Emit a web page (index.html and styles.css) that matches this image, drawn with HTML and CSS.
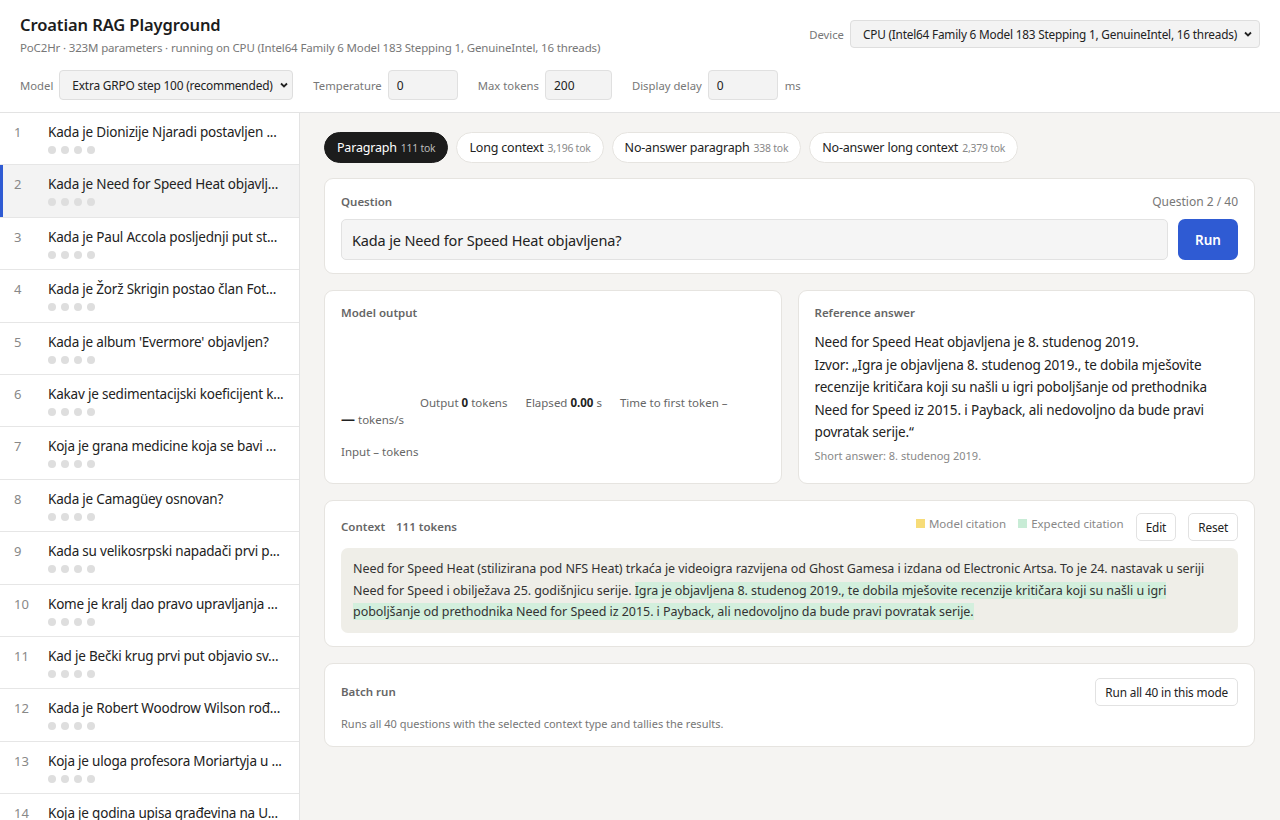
FILE: index.html
```html
<!DOCTYPE html>
<html lang="hr">
<head>
<meta charset="utf-8">
<title>Croatian RAG Playground</title>
<link rel="stylesheet" href="styles.css">
</head>
<body>
<header class="topbar">
  <div class="top-row">
    <div class="brand">
      <h1 class="title">Croatian RAG Playground</h1>
      <div class="subtitle">PoC2Hr · 323M parameters · running on CPU (Intel64 Family 6 Model 183 Stepping 1, GenuineIntel, 16 threads)</div>
    </div>
    <label class="field device">
      <span class="field-label">Device</span>
      <span class="select select-device">CPU (Intel64 Family 6 Model 183 Stepping 1, GenuineIntel, 16 threads)<svg class="chev" viewBox="0 0 10 10"><path d="M2 3.5 L5 6.5 L8 3.5" fill="none" stroke="#222" stroke-width="1.8"/></svg></span>
    </label>
  </div>
  <div class="controls">
    <label class="field">
      <span class="field-label">Model</span>
      <span class="select select-model">Extra GRPO step 100 (recommended)<svg class="chev" viewBox="0 0 10 10"><path d="M2 3.5 L5 6.5 L8 3.5" fill="none" stroke="#222" stroke-width="1.8"/></svg></span>
    </label>
    <label class="field">
      <span class="field-label">Temperature</span>
      <span class="input input-sm">0</span>
    </label>
    <label class="field">
      <span class="field-label">Max tokens</span>
      <span class="input input-xs">200</span>
    </label>
    <label class="field">
      <span class="field-label">Display delay</span>
      <span class="input input-sm">0</span>
      <span class="field-label unit">ms</span>
    </label>
  </div>
</header>

<div class="layout">
  <aside class="sidebar">
    <div class="q-item"><span class="q-num">1</span><div class="q-body"><div class="q-text">Kada je Dionizije Njaradi postavljen ...</div><div class="dots"><i></i><i></i><i></i><i></i></div></div></div>
    <div class="q-item active"><span class="q-num">2</span><div class="q-body"><div class="q-text">Kada je Need for Speed Heat objavlj...</div><div class="dots"><i></i><i></i><i></i><i></i></div></div></div>
    <div class="q-item"><span class="q-num">3</span><div class="q-body"><div class="q-text">Kada je Paul Accola posljednji put st...</div><div class="dots"><i></i><i></i><i></i><i></i></div></div></div>
    <div class="q-item"><span class="q-num">4</span><div class="q-body"><div class="q-text">Kada je Žorž Skrigin postao član Fot...</div><div class="dots"><i></i><i></i><i></i><i></i></div></div></div>
    <div class="q-item"><span class="q-num">5</span><div class="q-body"><div class="q-text">Kada je album 'Evermore' objavljen?</div><div class="dots"><i></i><i></i><i></i><i></i></div></div></div>
    <div class="q-item"><span class="q-num">6</span><div class="q-body"><div class="q-text">Kakav je sedimentacijski koeficijent k...</div><div class="dots"><i></i><i></i><i></i><i></i></div></div></div>
    <div class="q-item"><span class="q-num">7</span><div class="q-body"><div class="q-text">Koja je grana medicine koja se bavi ...</div><div class="dots"><i></i><i></i><i></i><i></i></div></div></div>
    <div class="q-item"><span class="q-num">8</span><div class="q-body"><div class="q-text">Kada je Camagüey osnovan?</div><div class="dots"><i></i><i></i><i></i><i></i></div></div></div>
    <div class="q-item"><span class="q-num">9</span><div class="q-body"><div class="q-text">Kada su velikosrpski napadači prvi p...</div><div class="dots"><i></i><i></i><i></i><i></i></div></div></div>
    <div class="q-item"><span class="q-num">10</span><div class="q-body"><div class="q-text">Kome je kralj dao pravo upravljanja ...</div><div class="dots"><i></i><i></i><i></i><i></i></div></div></div>
    <div class="q-item"><span class="q-num">11</span><div class="q-body"><div class="q-text">Kad je Bečki krug prvi put objavio sv...</div><div class="dots"><i></i><i></i><i></i><i></i></div></div></div>
    <div class="q-item"><span class="q-num">12</span><div class="q-body"><div class="q-text">Kada je Robert Woodrow Wilson rođ...</div><div class="dots"><i></i><i></i><i></i><i></i></div></div></div>
    <div class="q-item"><span class="q-num">13</span><div class="q-body"><div class="q-text">Koja je uloga profesora Moriartyja u ...</div><div class="dots"><i></i><i></i><i></i><i></i></div></div></div>
    <div class="q-item"><span class="q-num">14</span><div class="q-body"><div class="q-text">Koja je godina upisa građevina na U...</div><div class="dots"><i></i><i></i><i></i><i></i></div></div></div>
  </aside>

  <main class="main">
    <div class="pills">
      <span class="pill active">Paragraph <small>111 tok</small></span>
      <span class="pill">Long context <small>3,196 tok</small></span>
      <span class="pill">No-answer paragraph <small>338 tok</small></span>
      <span class="pill">No-answer long context <small>2,379 tok</small></span>
    </div>

    <section class="card">
      <div class="card-head">
        <span class="card-label">Question</span>
        <span class="card-meta">Question 2 / 40</span>
      </div>
      <div class="ask-row">
        <div class="ask-input">Kada je Need for Speed Heat objavljena?</div>
        <button class="btn-primary">Run</button>
      </div>
    </section>

    <div class="two-col">
      <section class="card">
        <div class="card-label">Model output</div>
        <div class="stats">
          <div class="stats-line">
            <span>Output <b>0</b> tokens</span>
            <span>Elapsed <b>0.00</b> s</span>
            <span>Time to first token –</span>
          </div>
          <div class="rate"><b class="bigdash">—</b> tokens/s</div>
        </div>
        <div class="input-tokens">Input – tokens</div>
      </section>
      <section class="card">
        <div class="card-label">Reference answer</div>
        <div class="answer">Need for Speed Heat objavljena je 8. studenog 2019.<br>Izvor: „Igra je objavljena 8. studenog 2019., te dobila mješovite recenzije kritičara koji su našli u igri poboljšanje od prethodnika Need for Speed iz 2015. i Payback, ali nedovoljno da bude pravi povratak serije.“</div>
        <div class="short">Short answer: 8. studenog 2019.</div>
      </section>
    </div>

    <section class="card">
      <div class="card-head ctx-head">
        <span class="card-label">Context <span class="tok">111 tokens</span></span>
        <div class="ctx-tools">
          <span class="legend"><i class="sw sw-model"></i>Model citation</span>
          <span class="legend"><i class="sw sw-exp"></i>Expected citation</span>
          <button class="btn">Edit</button>
          <button class="btn">Reset</button>
        </div>
      </div>
      <div class="ctx-box">Need for Speed Heat (stilizirana pod NFS Heat) trkaća je videoigra razvijena od Ghost Gamesa i izdana od Electronic Artsa. To je 24. nastavak u seriji Need for Speed i obilježava 25. godišnjicu serije. <mark class="exp">Igra je objavljena 8. studenog 2019., te dobila mješovite recenzije kritičara koji su našli u igri poboljšanje od prethodnika Need for Speed iz 2015. i Payback, ali nedovoljno da bude pravi povratak serije.</mark></div>
    </section>

    <section class="card">
      <div class="card-head batch-head">
        <span class="card-label">Batch run</span>
        <button class="btn">Run all 40 in this mode</button>
      </div>
      <div class="batch-note">Runs all 40 questions with the selected context type and tallies the results.</div>
    </section>
  </main>
</div>
</body>
</html>
```

FILE: styles.css
```css
* { box-sizing: border-box; }
html, body { margin: 0; padding: 0; height: 100%; }
body {
  font-family: "Noto Sans", "Open Sans", sans-serif;
  color: #222;
  background: #f5f4f2;
  overflow: hidden;
  font-size: 13px;
}

.topbar {
  background: #fff;
  border-bottom: 1px solid #e3e3e3;
  height: 113px;
  padding: 14px 20px 0 20px;
}
.top-row { display: flex; justify-content: space-between; align-items: flex-start; }
.title { margin: 0; font-size: 16.5px; font-weight: 600; line-height: 22px; color: #1c1c1c; letter-spacing: -0.1px; }
.subtitle { font-size: 11.5px; color: #777; margin-top: 4px; letter-spacing: -0.15px; }

.field { display: flex; align-items: center; gap: 6px; white-space: nowrap; }
.field-label { font-size: 11.3px; color: #777; }
.unit { margin-left: 1px; }
.device { margin-top: 6px; gap: 6px; }

.select {
  display: inline-flex; align-items: center; justify-content: space-between; flex: none;
  height: 30px; padding: 0 6px 0 12px; white-space: nowrap;
  background: #f3f3f3; border: 1px solid #dedede; border-radius: 4px;
  font-size: 12px; color: #222; letter-spacing: -0.2px;
}
.select-device { width: 410px; height: 28px; font-size: 11.8px; }
.select-model { width: 234px; font-size: 11.9px; }
.chev { width: 10px; height: 10px; margin-left: 6px; flex: none; }

.controls { display: flex; align-items: center; gap: 20px; margin-top: 15px; }
.input {
  display: inline-flex; align-items: center; flex: none;
  height: 30px; padding: 0 8px;
  background: #f3f3f3; border: 1px solid #e0e0e0; border-radius: 4px;
  font-size: 12px; color: #222;
}
.input-sm { width: 70px; }
.input-xs { width: 67px; }

.layout { display: flex; height: calc(100% - 113px); }

.sidebar {
  width: 300px; flex: none;
  background: #fff; border-right: 1px solid #e3e3e3;
  overflow: hidden;
}
.q-item {
  display: flex; gap: 0;
  height: 52.4px;
  border-bottom: 1px solid #e6e6e6;
  padding: 10px 10px 0 14px;
  position: relative;
}
.q-item.active { background: #f3f3f3; }
.q-item.active::before {
  content: ""; position: absolute; left: 0; top: 0; bottom: 0; width: 3px; background: #2f5bd3;
}
.q-num { width: 34px; flex: none; color: #888; font-size: 13px; line-height: 18px; }
.q-text { font-size: 13.5px; line-height: 18px; color: #222; white-space: nowrap; letter-spacing: -0.2px; }
.dots { display: flex; gap: 5px; margin-top: 5px; }
.dots i { width: 8px; height: 8px; border-radius: 50%; background: #dedede; display: block; }

.main {
  flex: 1; padding: 19px 25px 0 24px;
  display: flex; flex-direction: column; gap: 16px;
}
.pills { display: flex; gap: 8px; margin-bottom: -1px; }
.pill {
  height: 31px; display: inline-flex; align-items: center;
  padding: 0 12px; border-radius: 16px;
  background: #fff; border: 1px solid #e6e4e0;
  font-size: 12.5px; color: #222; letter-spacing: -0.2px;
}
.pill small { font-size: 10.4px; color: #888; margin-left: 4px; }
.pill.active { background: #1c1c1c; border-color: #1c1c1c; color: #fff; }
.pill.active small { color: #bbb; }

.card {
  background: #fff; border: 1px solid #e6e4e0; border-radius: 9px;
  padding: 14px 16px 13px 16px;
}
.card-head { display: flex; justify-content: space-between; align-items: center; }
.card-label { font-size: 11.5px; font-weight: 600; color: #666; line-height: 16px; }
.card-meta { font-size: 12px; color: #777; }

.ask-row { display: flex; gap: 10px; margin-top: 9px; }
.ask-input {
  flex: 1; height: 41px; display: flex; align-items: center;
  padding: 0 10px; background: #f5f5f5; border: 1px solid #e2e2e2; border-radius: 5px;
  font-size: 14.5px; color: #222; letter-spacing: -0.15px;
}
.btn-primary {
  width: 60px; height: 41px; border: none; border-radius: 7px;
  background: #2f5bd3; color: #fff; font: 600 13.5px "Noto Sans", sans-serif;
}

.two-col { display: grid; grid-template-columns: 1fr 1fr; gap: 16px; }
.two-col .card { padding-top: 14px; min-height: 194px; }

.stats { margin-top: 74px; font-size: 11.5px; color: #666; }
.stats-line { display: flex; gap: 18px; padding-left: 79px; }
.stats b { color: #222; font-weight: 700; }
.rate { margin-top: 1px; line-height: 16px; }
.bigdash { font-size: 14px; color: #111; }
.input-tokens { margin-top: 16px; font-size: 11.5px; color: #666; }

.answer { margin-top: 10px; font-size: 13.5px; line-height: 22.5px; color: #222; letter-spacing: -0.15px; }
.short { margin-top: 4px; font-size: 11px; color: #888; }

.ctx-head { min-height: 28px; margin-top: -2px; }
.tok { margin-left: 8px; }
.ctx-tools { display: flex; align-items: center; gap: 12px; }
.legend { display: inline-flex; align-items: center; gap: 4px; font-size: 11.5px; color: #888; margin-top: -7px; }
.sw { width: 9px; height: 9px; display: block; }
.sw-model { background: #f7dc78; }
.sw-exp { background: #c8ecd6; }
.btn {
  height: 28px; padding: 0 9px; background: #fff;
  border: 1px solid #e2e2e2; border-radius: 5px;
  font: 11.8px "Noto Sans", sans-serif; color: #222; letter-spacing: -0.15px;
}
.ctx-box {
  margin-top: 7px; background: #efeee8; border-radius: 7px;
  padding: 10px 12px 10px 12px;
  font-size: 12.5px; line-height: 21.5px; color: #333; letter-spacing: -0.06px;
}
mark.exp { background: #d3efdd; color: #333; }

.batch-head { min-height: 28px; }
.batch-note { margin-top: 10px; font-size: 11px; color: #777; padding-bottom: 2px; }
```
